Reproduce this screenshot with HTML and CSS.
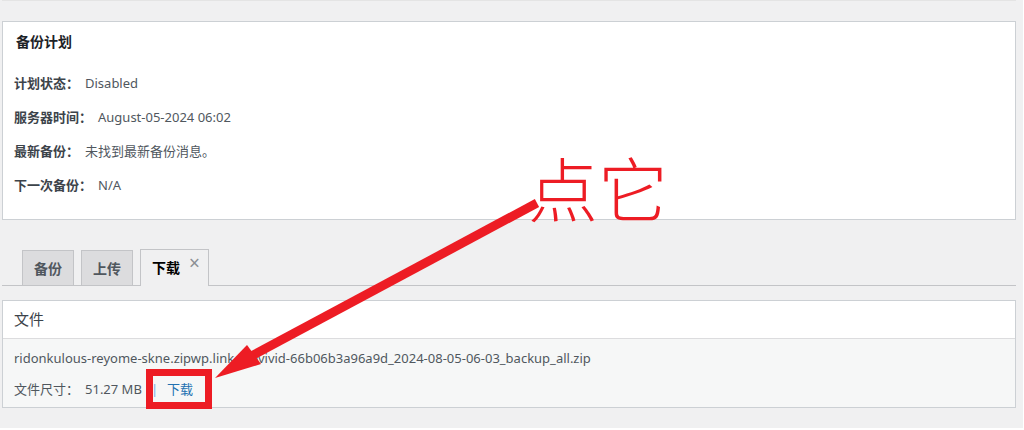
FILE: index.html
```html
<!DOCTYPE html>
<html lang="zh-CN">
<head>
    <meta charset="UTF-8">
    <title>备份计划</title>
    <link rel="stylesheet" href="styles.css">
</head>
<body>
    <div class="topline"></div>
    <div class="wrap">
        <div class="postbox schedule">
            <h2>备份计划</h2>
            <div class="row"><span class="label">计划状态：</span><span class="value">Disabled</span></div>
            <div class="row"><span class="label">服务器时间：</span><span class="value">August-05-2024 06:02</span></div>
            <div class="row"><span class="label">最新备份：</span><span class="value">未找到最新备份消息。</span></div>
            <div class="row"><span class="label">下一次备份：</span><span class="value">N/A</span></div>
        </div>

        <div class="tabs">
            <span class="tab">备份</span>
            <span class="tab">上传</span>
            <span class="tab active">下载<span class="close">×</span></span>
        </div>

        <div class="postbox files">
            <div class="files-head">文件</div>
            <div class="files-body">
                <div class="file-name">ridonkulous-reyome-skne.zipwp.link_wpvivid-66b06b3a96a9d_2024-08-05-06-03_backup_all.zip</div>
                <div class="file-meta">
                    <span>文件尺寸：</span><span class="size">51.27 MB</span><span class="sep">|</span><a href="#" class="dl">下载</a>
                </div>
            </div>
        </div>
    </div>

    <!-- annotation drawn over the screenshot -->
    <div class="note">点它</div>
    <svg class="arrow" width="1024" height="430" viewBox="0 0 1024 430">
        <line x1="537" y1="203" x2="246" y2="359" stroke="#ed1c24" stroke-width="9"/>
        <polygon points="215,378 247,345 261,364" fill="#ed1c24"/>
        <rect x="149.5" y="372.5" width="59" height="33" fill="none" stroke="#ed1c24" stroke-width="7"/>
    </svg>
</body>
</html>
```

FILE: styles.css
```css
html {
    background: #fff;
}
body {
    margin: 0;
    width: 1023px;
    height: 428px;
    background: #f0f0f1;
    font-family: "Noto Sans", "Noto Sans CJK SC", sans-serif;
    font-size: 13px;
    color: #50575e;
    position: relative;
    overflow: hidden;
}
.topline {
    width: 1014px;
    height: 1px;
    margin-left: 2px;
    background: #e4e4e4;
}
.wrap {
    width: 1014px;
    margin-left: 2px;
}
.postbox {
    background: #fff;
    border: 1px solid #ccd0d4;
}
.schedule {
    margin-top: 20px;
    padding: 10px 0 17px;
}
.schedule h2 {
    margin: 0 0 14px 13px;
    font-size: 14px;
    line-height: 20px;
    font-weight: bold;
    color: #1d2327;
}
.row {
    height: 34px;
    line-height: 34px;
    padding-left: 11px;
}
.label {
    font-weight: bold;
    color: #3c434a;
}
.value {
    margin-left: 6px;
}
.tabs {
    display: flex;
    align-items: flex-end;
    gap: 7px;
    margin-top: 29px;
    padding-left: 20px;
    border-bottom: 1px solid #c3c4c7;
}
.tab {
    height: 35px;
    line-height: 36px;
    padding: 0 11px;
    border: 1px solid #c3c4c7;
    border-bottom: none;
    background: #dcdcde;
    font-size: 14px;
    font-weight: bold;
    color: #50575e;
    box-sizing: border-box;
}
.tab.active {
    height: 37px;
    margin-bottom: -1px;
    padding-right: 8px;
    background: #f0f0f1;
    color: #000;
}
.close {
    margin-left: 9px;
    font-size: 19px;
    font-weight: normal;
    color: #8c8f94;
    vertical-align: 3px;
    line-height: 1;
}
.files {
    margin-top: 14px;
}
.files-head {
    height: 37px;
    line-height: 37px;
    padding-left: 11px;
    font-size: 15px;
    color: #3c434a;
    border-bottom: 1px solid #dcdcde;
}
.files-body {
    background: #f6f7f7;
    padding: 9px 11px 8px;
}
.file-name {
    line-height: 20px;
}
.file-meta {
    margin-top: 11px;
    line-height: 20px;
}
.size {
    margin-left: 6px;
}
.sep {
    margin: 0 9px 0 9px;
    color: #72aee6;
}
.dl {
    color: #2271b1;
    text-decoration: none;
}
.note {
    position: absolute;
    left: 528px;
    top: 152px;
    font-family: "Noto Sans CJK SC", sans-serif;
    font-weight: 300;
    font-size: 70px;
    line-height: 1;
    color: #ed1c24;
}
.arrow {
    position: absolute;
    left: 0;
    top: 0;
}
```
